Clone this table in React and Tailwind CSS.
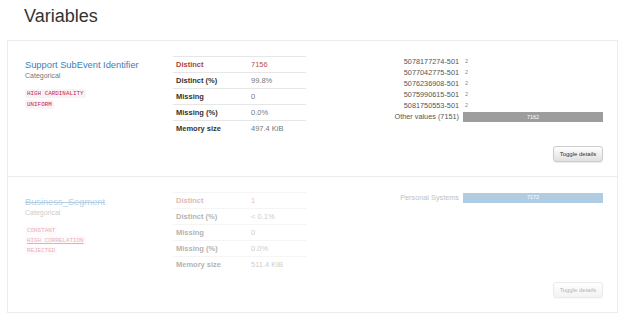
import React from 'react';

const variables = [
  {
    name: 'Support SubEvent Identifier',
    type: 'Categorical',
    rejected: false,
    badges: [{ label: 'HIGH CARDINALITY' }, { label: 'UNIFORM' }],
    stats: [
      ['Distinct', '7156', true],
      ['Distinct (%)', '99.8%'],
      ['Missing', '0'],
      ['Missing (%)', '0.0%'],
      ['Memory size', '497.4 KiB'],
    ],
    freq: [
      ['5078177274-501', '2'],
      ['5077042775-501', '2'],
      ['5076236908-501', '2'],
      ['5075990615-501', '2'],
      ['5081750553-501', '2'],
    ],
    other: ['Other values (7151)', '7162'],
  },
  {
    name: 'Business_Segment',
    type: 'Categorical',
    rejected: true,
    badges: [{ label: 'CONSTANT' }, { label: 'HIGH CORRELATION', link: true }, { label: 'REJECTED' }],
    stats: [
      ['Distinct', '1', true],
      ['Distinct (%)', '< 0.1%'],
      ['Missing', '0'],
      ['Missing (%)', '0.0%'],
      ['Memory size', '511.4 KiB'],
    ],
    freq: [],
    top: ['Personal Systems', '7172'],
  },
];

function VariableRow({ v, first }) {
  return (
    <div className={`pt-[15px] pb-[14px] pl-[17px] pr-[14px] ${first ? '' : 'border-t border-[#ececec]'}`}>
      <div className={v.rejected ? 'opacity-[0.38]' : ''}>
        <div className="flex items-start">
          {/* name + alerts */}
          <div className={`w-[148px] ${v.rejected ? 'pt-[4px]' : 'pt-[3px]'}`}>
            <div className={`text-[9.3px] leading-[12px] text-[#3a7fba] ${v.rejected ? 'line-through' : ''}`}>{v.name}</div>
            <div className="text-[7px] leading-[10px] text-[#777]">{v.type}</div>
            <div className={`mt-[8px] flex flex-col items-start ${v.rejected ? 'gap-[1px]' : 'gap-[2px]'}`}>
              {v.badges.map((b) => (
                <code
                  key={b.label}
                  className={`px-[2px] h-[9px] leading-[9px] text-[5.9px] text-[#c7254e] bg-[#faf3f5] rounded-[2px] ${b.link ? 'underline' : ''}`}
                  style={{ fontFamily: '"Liberation Mono", monospace' }}
                >
                  {b.label}
                </code>
              ))}
            </div>
          </div>

          {/* stats table */}
          <div className="w-[133px] text-[7.5px]">
            {v.stats.map(([k, val, alert]) => (
              <div key={k} className="flex h-[16px] items-center border-t border-[#e6e6e6]">
                <div className={`w-[73px] pl-[3px] font-bold ${alert ? 'text-[#a94442]' : 'text-[#333]'}`}>{k}</div>
                <div className={`pl-[5px] ${alert ? 'text-[#b05352]' : 'text-[#777]'}`}>{val}</div>
              </div>
            ))}
          </div>

          {/* frequencies */}
          <div className="ml-auto grid grid-cols-[auto_140px] gap-x-[4px] text-[7.3px] text-[#555]">
            {v.freq.map(([label, count]) => (
              <React.Fragment key={label}>
                <div className="h-[11px] leading-[11px] text-right">{label}</div>
                <div className="h-[11px] leading-[11px] pl-[2px] text-[5.5px] text-[#888]">{count}</div>
              </React.Fragment>
            ))}
            {v.other && (
              <>
                <div className="h-[12px] leading-[12px] text-right">{v.other[0]}</div>
                <div className="h-[12px] flex items-center">
                  <div className="w-full h-[10px] bg-[#9d9d9d] flex items-center justify-center text-[5.5px] text-white">{v.other[1]}</div>
                </div>
              </>
            )}
            {v.top && (
              <>
                <div className="h-[11px] leading-[11px] text-right">{v.top[0]}</div>
                <div className="h-[11px] flex items-center">
                  <div className="w-full h-[10px] bg-[#337ab7] flex items-center justify-center text-[5.5px] text-white">{v.top[1]}</div>
                </div>
              </>
            )}
          </div>
        </div>

        <div className="flex justify-end mt-[10px]">
          <button className="w-[50px] h-[16px] text-[6px] text-[#333] border border-[#ccc] rounded-[3px] bg-gradient-to-b from-white to-[#e0e0e0] shadow-[0_1px_1px_rgba(0,0,0,0.08)]">
            Toggle details
          </button>
        </div>
      </div>
    </div>
  );
}

export default function App() {
  return (
    <div className="w-[624px] h-[319px] bg-white overflow-hidden" style={{ fontFamily: '"Liberation Sans", Arial, sans-serif' }}>
      <div className="h-[40px] pl-[24px] pt-[5px]">
        <h1 className="text-[18px] leading-[22px] text-[#333]">Variables</h1>
      </div>
      <div className="ml-[7px] w-[611px] border border-[#ececec]">
        {variables.map((v, i) => (
          <VariableRow key={v.name} v={v} first={i === 0} />
        ))}
      </div>
    </div>
  );
}
